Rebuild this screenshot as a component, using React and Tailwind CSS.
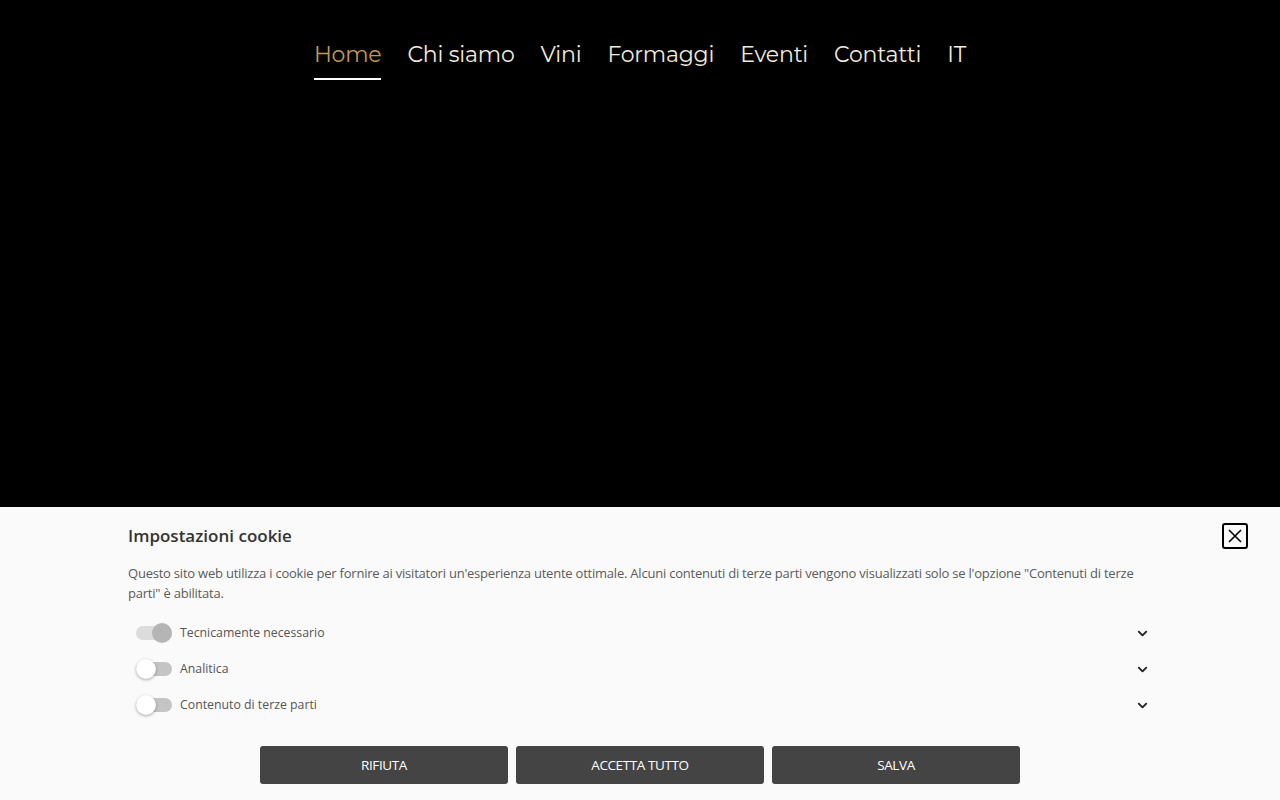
import React, { useState } from 'react';
import { ChevronDown } from 'lucide-react';

const links = ['Home', 'Chi siamo', 'Vini', 'Formaggi', 'Eventi', 'Contatti', 'IT'];

const Toggle = ({ on, locked }) => (
  <div className="relative w-[36px] h-[20px] flex items-center shrink-0">
    <div className={`w-[36px] h-[14px] rounded-full ${locked ? 'bg-[#dcdcdc]' : 'bg-[#c4c4c4]'}`} />
    <div
      className={`absolute top-0 w-[20px] h-[20px] rounded-full ${
        locked ? 'bg-[#b5b5b5]' : 'bg-white shadow-[0_1px_3px_rgba(0,0,0,0.35)]'
      } ${on ? 'left-[16px]' : 'left-0'}`}
    />
  </div>
);

const CookieRow = ({ label, on, locked }) => (
  <div className="h-[36px] flex items-center">
    <div className="ml-[8px] flex items-center gap-[8px] flex-1">
      <Toggle on={on} locked={locked} />
      <span className="text-[12.3px] text-[#555]">{label}</span>
    </div>
    <ChevronDown size={15} strokeWidth={3} className="text-[#222] mr-[4px]" />
  </div>
);

const App = () => {
  const [active] = useState('Home');

  return (
    <div className="w-full h-[800px] bg-black flex flex-col overflow-hidden">
      <nav className="pt-[39px] flex justify-center">
        <ul className="flex gap-[26px] font-['Montserrat','Inter',sans-serif] text-[22px]">
          {links.map((l) => (
            <li key={l} className="flex flex-col items-stretch">
              <span className={`leading-[32px] tracking-[-0.2px] ${l === active ? 'text-[#c19a5b]' : 'text-[#f3ebdc]'}`}>{l}</span>
              <span className={`mt-[7px] h-[2px] ${l === active ? 'bg-white' : 'bg-transparent'}`} />
            </li>
          ))}
        </ul>
      </nav>

      <div className="flex-1" />

      <section className="h-[293px] bg-[#fafafa] font-['Open_Sans','Noto_Sans',sans-serif] px-[128px] pt-[15px] relative">
        <button className="absolute right-[32px] top-[16px] w-[26px] h-[26px] border-2 border-black rounded-[3px] flex items-center justify-center">
          <svg width="16" height="16" viewBox="0 0 16 16" fill="none" stroke="black" strokeWidth="1.6">
            <path d="M2 2 L14 14 M14 2 L2 14" />
          </svg>
        </button>
        <h2 className="text-[17px] font-semibold text-[#333] leading-[28px]">Impostazioni cookie</h2>
        <p className="mt-[13px] text-[13px] leading-[20px] text-[#5a5a5a] tracking-[-0.22px]">
          Questo sito web utilizza i cookie per fornire ai visitatori un'esperienza utente ottimale. Alcuni contenuti di terze parti vengono visualizzati solo se l'opzione "Contenuti di terze parti" è abilitata.
        </p>
        <div className="mt-[12px] mr-[-2px]">
          <CookieRow label="Tecnicamente necessario" on locked />
          <CookieRow label="Analitica" />
          <CookieRow label="Contenuto di terze parti" />
        </div>
        <div className="mt-[23px] flex justify-center gap-[8px]">
          {['RIFIUTA', 'ACCETTA TUTTO', 'SALVA'].map((b) => (
            <button
              key={b}
              className="w-[248px] h-[38px] bg-[#444] rounded-[3px] text-white text-[13.5px] tracking-[-0.4px] font-['Liberation_Sans_Narrow','Open_Sans',sans-serif]"
            >
              {b}
            </button>
          ))}
        </div>
      </section>
    </div>
  );
};

export default App;
